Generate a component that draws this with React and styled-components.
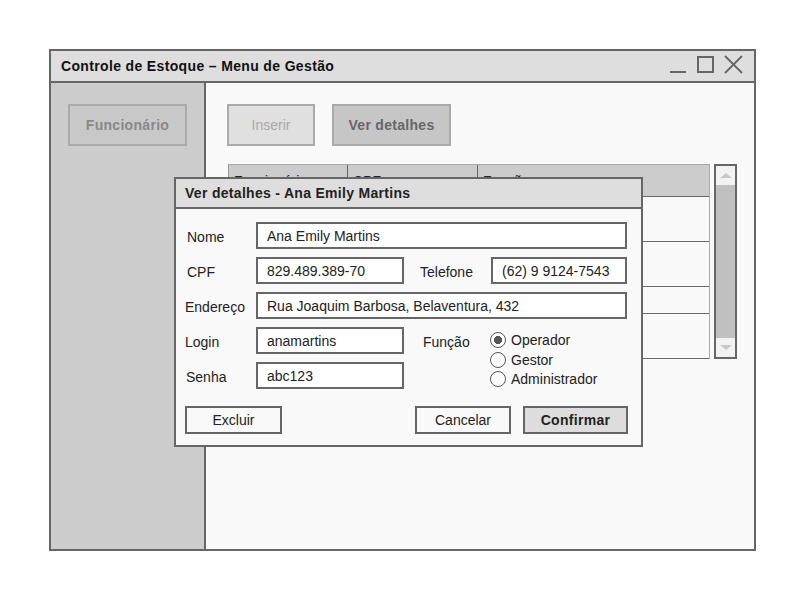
import React from "react";
import styled, { createGlobalStyle } from "styled-components";

const GlobalStyle = createGlobalStyle`
  body {
    margin: 0;
    background: #ffffff;
    font-family: "Liberation Sans", Arial, sans-serif;
  }
`;

const columns = ["Funcionário", "CPF", "Função"];
const rowHeights = [45, 45, 27, 45];

export default function App() {
  return (
    <Page>
      <GlobalStyle />
      <Window>
        <TitleBar>
          <h1>Controle de Estoque – Menu de Gestão</h1>
          <WindowControls />
        </TitleBar>
        <Body>
          <Sidebar>
            <NavButton>Funcionário</NavButton>
          </Sidebar>
          <Content>
            <Toolbar>
              <ToolButton $w={88} $disabled>
                Inserir
              </ToolButton>
              <ToolButton $w={119}>Ver detalhes</ToolButton>
            </Toolbar>
            <TableArea>
              <Table>
                <HeaderRow>
                  {columns.map((c) => (
                    <Cell key={c}>{c}</Cell>
                  ))}
                </HeaderRow>
                {rowHeights.map((h, i) => (
                  <Row key={i} style={{ height: h }}>
                    <Cell />
                    <Cell />
                    <Cell />
                  </Row>
                ))}
              </Table>
              <Scrollbar>
                <ScrollEnd>
                  <Arrow />
                </ScrollEnd>
                <ScrollThumb />
                <ScrollEnd>
                  <Arrow $down />
                </ScrollEnd>
              </Scrollbar>
            </TableArea>
          </Content>
          <DetailsDialog />
        </Body>
      </Window>
    </Page>
  );
}

function WindowControls() {
  return (
    <svg width="76" height="22" viewBox="0 0 76 22" stroke="#666" fill="none">
      <line x1="1" y1="17" x2="17" y2="17" strokeWidth="2" />
      <rect x="29" y="2" width="15" height="15" strokeWidth="2" />
      <path d="M56 1 L73 18 M73 1 L56 18" strokeWidth="1.8" />
    </svg>
  );
}

function DetailsDialog() {
  return (
    <Dialog>
      <DialogTitle>Ver detalhes - Ana Emily Martins</DialogTitle>
      <Form>
        <Label $pad={2}>Nome</Label>
        <Input $span={3}>Ana Emily Martins</Input>

        <Label $pad={2}>CPF</Label>
        <Input>829.489.389-70</Input>
        <Label $pad={16}>Telefone</Label>
        <Input>(62) 9 9124-7543</Input>

        <Label>Endereço</Label>
        <Input $span={3}>Rua Joaquim Barbosa, Belaventura, 432</Input>

        <Label>Login</Label>
        <Input>anamartins</Input>
        <Label $pad={19}>Função</Label>
        <RadioGroup>
          <Radio $checked>Operador</Radio>
          <Radio>Gestor</Radio>
          <Radio>Administrador</Radio>
        </RadioGroup>

        <Label $pad={1}>Senha</Label>
        <Input>abc123</Input>
      </Form>
      <Actions>
        <DialogButton $w={97}>Excluir</DialogButton>
        <ActionGroup>
          <DialogButton $w={96}>Cancelar</DialogButton>
          <DialogButton $w={105} $primary>
            Confirmar
          </DialogButton>
        </ActionGroup>
      </Actions>
    </Dialog>
  );
}

const Page = styled.div`
  padding: 49px 0 0 49px;
`;

const Window = styled.div`
  width: 707px;
  height: 502px;
  box-sizing: border-box;
  border: 2px solid #666;
  background: #f9f9f9;
  display: flex;
  flex-direction: column;
`;

const TitleBar = styled.div`
  height: 32px;
  box-sizing: border-box;
  border-bottom: 2px solid #666;
  background: #dedede;
  display: flex;
  align-items: center;
  justify-content: space-between;
  padding: 0 9px 0 10px;

  h1 {
    margin: 0;
    font-size: 14px;
    font-weight: bold;
    letter-spacing: 0.35px;
    color: #111;
  }
`;

const Body = styled.div`
  flex: 1;
  display: flex;
  position: relative;
`;

const Sidebar = styled.div`
  width: 155px;
  box-sizing: border-box;
  background: #cccccc;
  border-right: 2px solid #666;
  padding: 21px 0 0 17px;
`;

const NavButton = styled.div`
  width: 119px;
  height: 42px;
  box-sizing: border-box;
  border: 2px solid #aaa;
  background: #c8c8c8;
  color: #888;
  font-size: 14px;
  font-weight: bold;
  letter-spacing: 0.3px;
  display: flex;
  align-items: center;
  justify-content: center;
`;

const Content = styled.div`
  flex: 1;
  padding: 21px 0 0 21px;
`;

const Toolbar = styled.div`
  display: flex;
  gap: 17px;
`;

const ToolButton = styled.div`
  width: ${(p) => p.$w}px;
  height: 42px;
  box-sizing: border-box;
  border: 2px solid #aaa;
  background: ${(p) => (p.$disabled ? "#e0e0e0" : "#c6c6c6")};
  color: ${(p) => (p.$disabled ? "#aaa" : "#666")};
  font-size: 14px;
  font-weight: ${(p) => (p.$disabled ? "normal" : "bold")};
  letter-spacing: ${(p) => (p.$disabled ? 0 : 0.3)}px;
  display: flex;
  align-items: center;
  justify-content: center;
`;

const TableArea = styled.div`
  display: flex;
  align-items: flex-start;
  gap: 4px;
  margin: 18px 0 0 1px;
`;

const Table = styled.div`
  width: 482px;
  box-sizing: border-box;
  border-right: 1px solid #aaa;
`;

const Row = styled.div`
  display: grid;
  grid-template-columns: 119px 130px 1fr;
  border-bottom: 1px solid #666;
  box-sizing: border-box;
`;

const HeaderRow = styled(Row)`
  height: 33px;
  background: #cccccc;
  border-top: 1px solid #aaa;
  border-left: 1px solid #999;
  align-items: center;
  font-size: 14px;
  color: #222;
`;

const Cell = styled.div`
  padding-left: 5px;
  border-right: 1px solid #666;
  height: 100%;
  display: flex;
  align-items: center;

  &:last-child {
    border-right: none;
  }
`;

const Scrollbar = styled.div`
  width: 23px;
  height: 195px;
  box-sizing: border-box;
  border: 2.5px solid #666;
  display: flex;
  flex-direction: column;
`;

const ScrollEnd = styled.div`
  height: 19px;
  background: #f2f2f2;
  display: flex;
  align-items: center;
  justify-content: center;
`;

const ScrollThumb = styled.div`
  flex: 1;
  background: #c0c0c0;
`;

const Arrow = styled.div`
  width: 0;
  height: 0;
  border-left: 6px solid transparent;
  border-right: 6px solid transparent;
  ${(p) =>
    p.$down
      ? "border-top: 5px solid #c8c8c8;"
      : "border-bottom: 5px solid #c8c8c8;"}
`;

const Dialog = styled.div`
  position: absolute;
  left: 123px;
  top: 94px;
  width: 469px;
  height: 270px;
  box-sizing: border-box;
  border: 2px solid #666;
  background: #f9f9f9;
  color: #222;
`;

const DialogTitle = styled.div`
  height: 30px;
  box-sizing: border-box;
  border-bottom: 2px solid #666;
  background: #dedede;
  padding-left: 9px;
  font-size: 14px;
  font-weight: bold;
  letter-spacing: 0.3px;
  display: flex;
  align-items: center;
`;

const Form = styled.div`
  display: grid;
  grid-template-columns: 71px 148px 87px 136px;
  grid-auto-rows: 27px;
  row-gap: 8px;
  padding: 13px 0 0 9px;
  font-size: 14px;
`;

const Label = styled.div`
  display: flex;
  align-items: center;
  padding-left: ${(p) => p.$pad || 0}px;
  padding-top: 2px;
`;

const Input = styled.div`
  grid-column: span ${(p) => p.$span || 1};
  box-sizing: border-box;
  border: 2px solid #666;
  background: #ffffff;
  padding-left: 9px;
  display: flex;
  align-items: center;
`;

const RadioGroup = styled.div`
  grid-row: span 2;
  padding-top: 3px;
  margin-left: -1px;
  display: flex;
  flex-direction: column;
`;

const Radio = styled.div`
  height: 20px;
  display: flex;
  align-items: center;
  gap: 5px;

  &::before {
    content: "";
    flex-shrink: 0;
    width: 14px;
    height: 14px;
    border: 1.5px solid #555;
    border-radius: 50%;
    background: ${(p) =>
      p.$checked
        ? "radial-gradient(circle, #555 0 3.8px, #fff 4.3px)"
        : "#fff"};
  }
`;

const Actions = styled.div`
  display: flex;
  justify-content: space-between;
  margin: 17px 13px 0 9px;
`;

const ActionGroup = styled.div`
  display: flex;
  gap: 12px;
`;

const DialogButton = styled.div`
  width: ${(p) => p.$w}px;
  height: 28px;
  box-sizing: border-box;
  border: 2px solid #666;
  background: ${(p) => (p.$primary ? "#dddddd" : "#f9f9f9")};
  font-size: 14px;
  font-weight: ${(p) => (p.$primary ? "bold" : "normal")};
  letter-spacing: ${(p) => (p.$primary ? 0.3 : 0)}px;
  display: flex;
  align-items: center;
  justify-content: center;
`;
